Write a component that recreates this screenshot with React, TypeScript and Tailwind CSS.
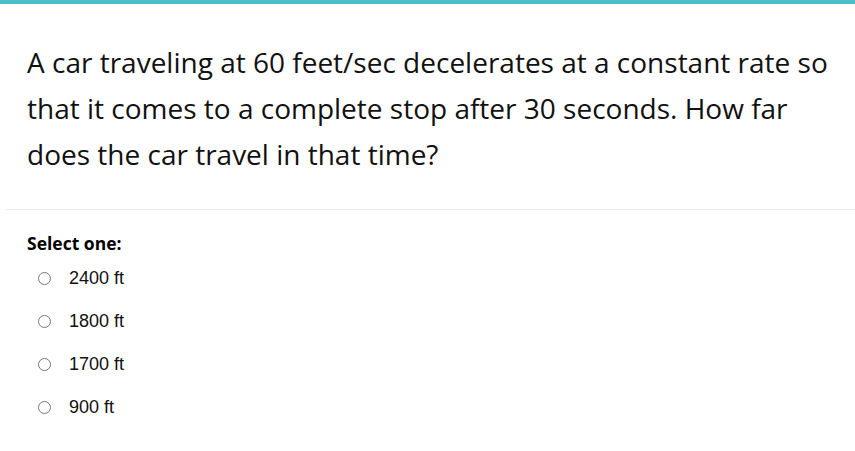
import React from 'react';

const options = ['2400 ft', '1800 ft', '1700 ft', '900 ft'];

export default function App() {
  return (
    <div className="min-h-screen bg-white">
      <div className="h-[4px] bg-[#4bbfc9]" />
      <div className="pl-[27px] pr-[8px] pt-[35px] pb-[32px]">
        <p
          className="text-[28px] leading-[46px] text-[#111]"
          style={{ fontFamily: '"Open Sans", sans-serif' }}
        >
          A car traveling at 60 feet/sec decelerates at a constant rate so that it comes to a complete stop after 30 seconds. How far does the car travel in that time?
        </p>
      </div>
      <div className="ml-[6px] border-t border-[#ebebeb]" />
      <div className="px-[27px] pt-[21px]" style={{ fontFamily: '"Liberation Sans", Arial, sans-serif' }}>
        <div
          className="text-[17.5px] leading-[24px] font-bold text-black"
          style={{ fontFamily: '"Open Sans", sans-serif' }}
        >
          Select one:
        </div>
        <div className="mt-[2px] flex flex-col">
          {options.map((o) => (
            <label key={o} className="flex items-center h-[43px] text-[18px] text-[#111]">
              <input type="radio" name="ans" className="ml-[11px] w-[13px] h-[13px] m-0" />
              <span className="ml-[18px]">{o}</span>
            </label>
          ))}
        </div>
      </div>
    </div>
  );
}
